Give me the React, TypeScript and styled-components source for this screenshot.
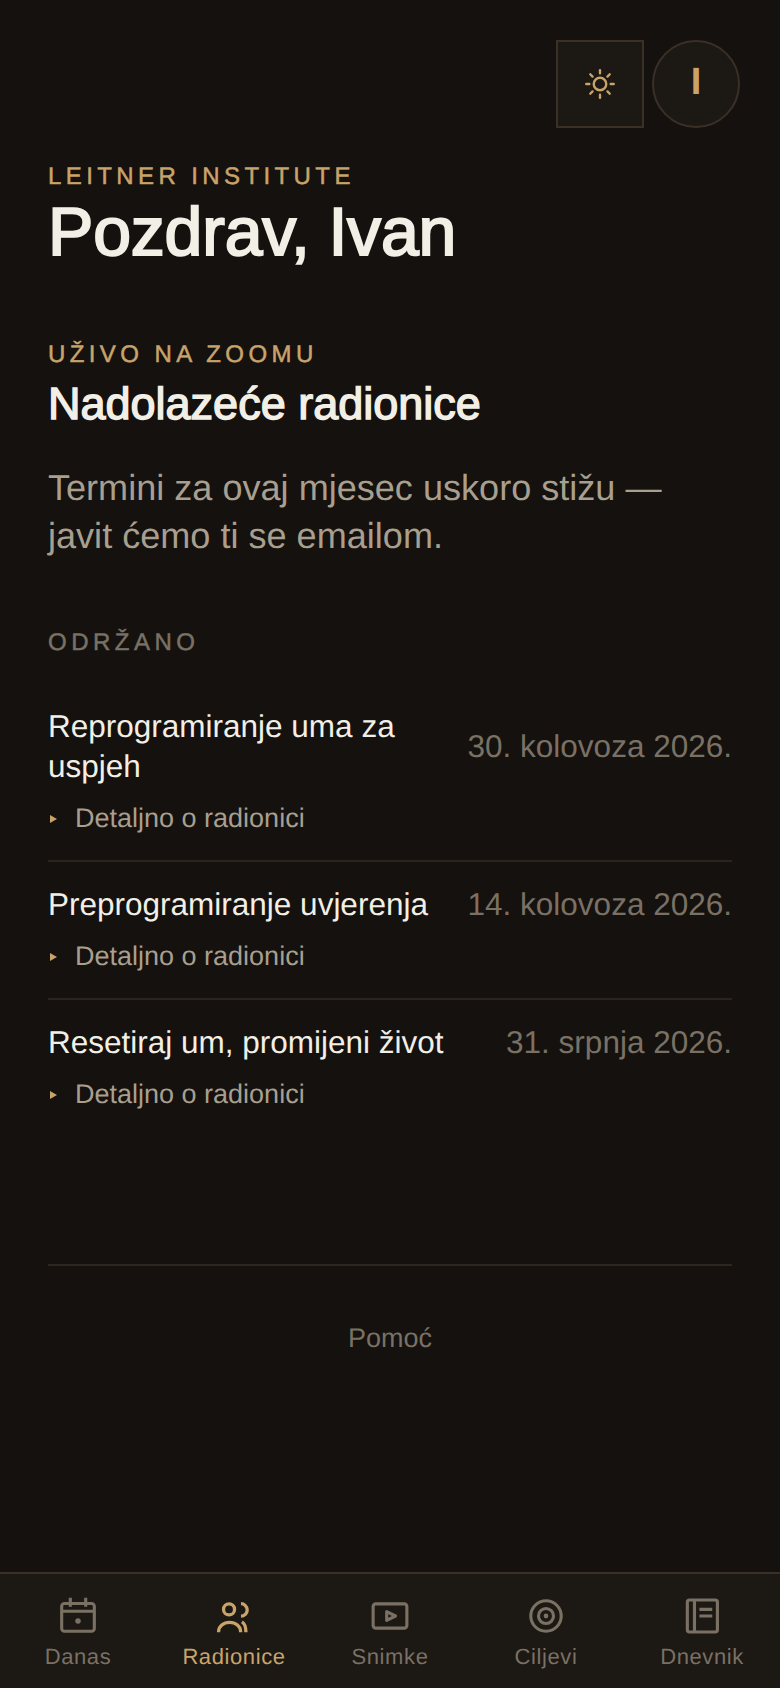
import React from 'react';
import styled, { createGlobalStyle } from 'styled-components';

const GlobalStyle = createGlobalStyle`
  html, body {
    margin: 0;
    padding: 0;
    background: #14110e;
    text-rendering: geometricPrecision;
  }
  * {
    box-sizing: border-box;
  }
`;

const workshops = [
  { title: 'Reprogramiranje uma za uspjeh', date: '30. kolovoza 2026.' },
  { title: 'Preprogramiranje uvjerenja', date: '14. kolovoza 2026.' },
  { title: 'Resetiraj um, promijeni život', date: '31. srpnja 2026.' },
];

const SunIcon = () => (
  <svg width="32" height="32" viewBox="0 0 24 24" fill="none" stroke="currentColor" strokeWidth="1.800" strokeLinecap="round">
    <circle cx="12" cy="12" r="4.700" />
    <path d="M12 1.700v2.300M12 20v2.300M1.700 12H4M20 12h2.300M4.700 4.700l1.700 1.700M17.600 17.600l1.700 1.700M4.700 19.300l1.700-1.700M17.600 6.400l1.700-1.700" />
  </svg>
);

const CalendarIcon = () => (
  <svg width="44" height="44" viewBox="0 0 24 24" fill="none" stroke="currentColor" strokeWidth="1.700" strokeLinecap="butt">
    <rect x="3.100" y="5.200" width="17.800" height="15.100" rx="1.500" />
    <path d="M3.100 9.400h17.800M7.800 2v5M16.200 2v5" />
    <circle cx="12" cy="14.700" r="1.500" fill="currentColor" stroke="none" />
  </svg>
);

const UsersIcon = () => (
  <svg width="44" height="44" viewBox="0 0 24 24" fill="none" stroke="currentColor" strokeWidth="1.800" strokeLinecap="butt">
    <circle cx="9.300" cy="8.400" r="3" />
    <path d="M3.600 20.900v-.4a6 5 0 0 1 12 0v.4" />
    <path d="M15.800 5.300a3.400 3.400 0 0 1 0 6.800M16.300 15.200c1.500.8 2.200 3 2.200 5.700" />
  </svg>
);

const VideoIcon = () => (
  <svg width="44" height="44" viewBox="0 0 24 24" fill="none" stroke="currentColor" strokeWidth="1.700" strokeLinejoin="round">
    <rect x="2.800" y="5.400" width="18.400" height="13.200" rx="1.400" />
    <path d="M10.200 9.600l4.800 2.400-4.800 2.400z" />
  </svg>
);

const TargetIcon = () => (
  <svg width="44" height="44" viewBox="0 0 24 24" fill="none" stroke="currentColor" strokeWidth="1.700">
    <circle cx="12" cy="12" r="8.300" />
    <circle cx="12" cy="12" r="4.100" />
    <circle cx="12" cy="12" r="1.300" fill="currentColor" stroke="none" />
  </svg>
);

const JournalIcon = () => (
  <svg width="44" height="44" viewBox="0 0 24 24" fill="none" stroke="currentColor" strokeWidth="1.700">
    <rect x="4" y="3.300" width="16.400" height="17.400" rx="1.200" />
    <path d="M7.900 3.300v17.400M10.600 8.400h7M10.600 12h7" />
  </svg>
);

const navItems = [
  { label: 'Danas', icon: <CalendarIcon /> },
  { label: 'Radionice', icon: <UsersIcon />, active: true },
  { label: 'Snimke', icon: <VideoIcon /> },
  { label: 'Ciljevi', icon: <TargetIcon /> },
  { label: 'Dnevnik', icon: <JournalIcon /> },
];

export default function App() {
  return (
    <Page>
      <GlobalStyle />
      <Main>
        <TopBar>
          <ThemeButton><SunIcon /></ThemeButton>
          <Avatar>I</Avatar>
        </TopBar>

        <Eyebrow>LEITNER INSTITUTE</Eyebrow>
        <Greeting>Pozdrav, Ivan</Greeting>

        <Section>
          <Eyebrow>UŽIVO NA ZOOMU</Eyebrow>
          <SectionTitle>Nadolazeće radionice</SectionTitle>
          <Lead>Termini za ovaj mjesec uskoro stižu — javit ćemo ti se emailom.</Lead>
        </Section>

        <PastLabel>ODRŽANO</PastLabel>
        <List>
          {workshops.map((w) => (
            <Row key={w.title}>
              <RowHead>
                <RowTitle>{w.title}</RowTitle>
                <RowDate>{w.date}</RowDate>
              </RowHead>
              <Details>
                <Caret />
                Detaljno o radionici
              </Details>
            </Row>
          ))}
        </List>

        <Footer>
          <HelpLink>Pomoć</HelpLink>
        </Footer>
      </Main>

      <BottomNav>
        {navItems.map((item) => (
          <NavItem key={item.label} $active={item.active}>
            {item.icon}
            <span>{item.label}</span>
          </NavItem>
        ))}
      </BottomNav>
    </Page>
  );
}

const Page = styled.div`
  width: 780px;
  height: 1688px;
  display: flex;
  flex-direction: column;
  background: #14110e;
  font-family: 'Liberation Sans', Arial, sans-serif;
  overflow: hidden;
`;

const Main = styled.main`
  flex: 1;
  padding: 40px 48px 0;
`;

const TopBar = styled.div`
  display: flex;
  justify-content: flex-end;
  gap: 8px;
  margin-right: -8px;
  margin-bottom: 35px;
`;

const ThemeButton = styled.button`
  width: 88px;
  height: 88px;
  padding: 0;
  display: flex;
  align-items: center;
  justify-content: center;
  color: #c9a46a;
  background: #1c1814;
  border: 2px solid #3a3026;
`;

const Avatar = styled.div`
  width: 88px;
  height: 88px;
  display: flex;
  align-items: center;
  justify-content: center;
  padding-bottom: 4px;
  font-size: 38px;
  font-weight: 700;
  color: #c9a46a;
  background: #1c1814;
  border: 2px solid #3a3026;
  border-radius: 50%;
`;

const Eyebrow = styled.div`
  font-size: 24px;
  line-height: 28px;
  letter-spacing: 4.400px;
  color: #c9a46a;
  -webkit-text-stroke: 0.5px #c9a46a;
`;

const Greeting = styled.h1`
  margin: 0;
  font-size: 68px;
  line-height: 82px;
  font-weight: 400;
  letter-spacing: -0.200px;
  color: #f2efe6;
  -webkit-text-stroke: 2px #f2efe6;
`;

const Section = styled.section`
  margin-top: 68px;
`;

const SectionTitle = styled.h2`
  margin: 7px 0 0;
  font-size: 45px;
  line-height: 56px;
  font-weight: 400;
  color: #f2efe6;
  -webkit-text-stroke: 1.4px #f2efe6;
`;

const Lead = styled.p`
  margin: 32px 0 0;
  font-size: 36.100px;
  line-height: 48px;
  color: #a89f8f;
`;

const PastLabel = styled.div`
  margin-top: 69px;
  font-size: 24px;
  line-height: 28px;
  letter-spacing: 4.500px;
  color: #7a7164;
  -webkit-text-stroke: 0.5px #7a7164;
`;

const List = styled.div`
  margin-top: 27px;
`;

const Row = styled.div`
  padding: 22px 0 24px;
  border-bottom: 2px solid #2a241d;

  &:last-child {
    border-bottom: none;
  }
`;

const RowHead = styled.div`
  display: flex;
  align-items: center;
  justify-content: space-between;
  gap: 24px;
`;

const RowTitle = styled.div`
  font-size: 31.500px;
  line-height: 40px;
  color: #f2efe6;
`;

const RowDate = styled.div`
  flex-shrink: 0;
  font-size: 31.500px;
  line-height: 40px;
  color: #7a7164;
`;

const Details = styled.div`
  display: flex;
  align-items: center;
  margin-top: 14px;
  font-size: 27px;
  line-height: 36px;
  color: #a89f8f;
`;

const Caret = styled.span`
  width: 0;
  height: 0;
  margin: 2px 18px 0 2px;
  border-left: 7px solid #c9a46a;
  border-top: 4px solid transparent;
  border-bottom: 4px solid transparent;
`;

const Footer = styled.footer`
  margin-top: 128px;
  padding-top: 54px;
  border-top: 2px solid #2e271f;
  text-align: center;
`;

const HelpLink = styled.a`
  font-size: 27px;
  line-height: 36px;
  color: #7a7164;
`;

const BottomNav = styled.nav`
  height: 116px;
  display: grid;
  grid-template-columns: repeat(5, 1fr);
  padding-top: 20px;
  background: #1c1814;
  border-top: 2px solid #3a3026;
`;

const NavItem = styled.div<{ $active?: boolean }>`
  display: flex;
  flex-direction: column;
  align-items: center;
  gap: 5px;
  font-size: 22px;
  line-height: 28px;
  letter-spacing: 0.600px;
  color: ${({ $active }) => ($active ? '#c9a46a' : '#7a7164')};
`;
